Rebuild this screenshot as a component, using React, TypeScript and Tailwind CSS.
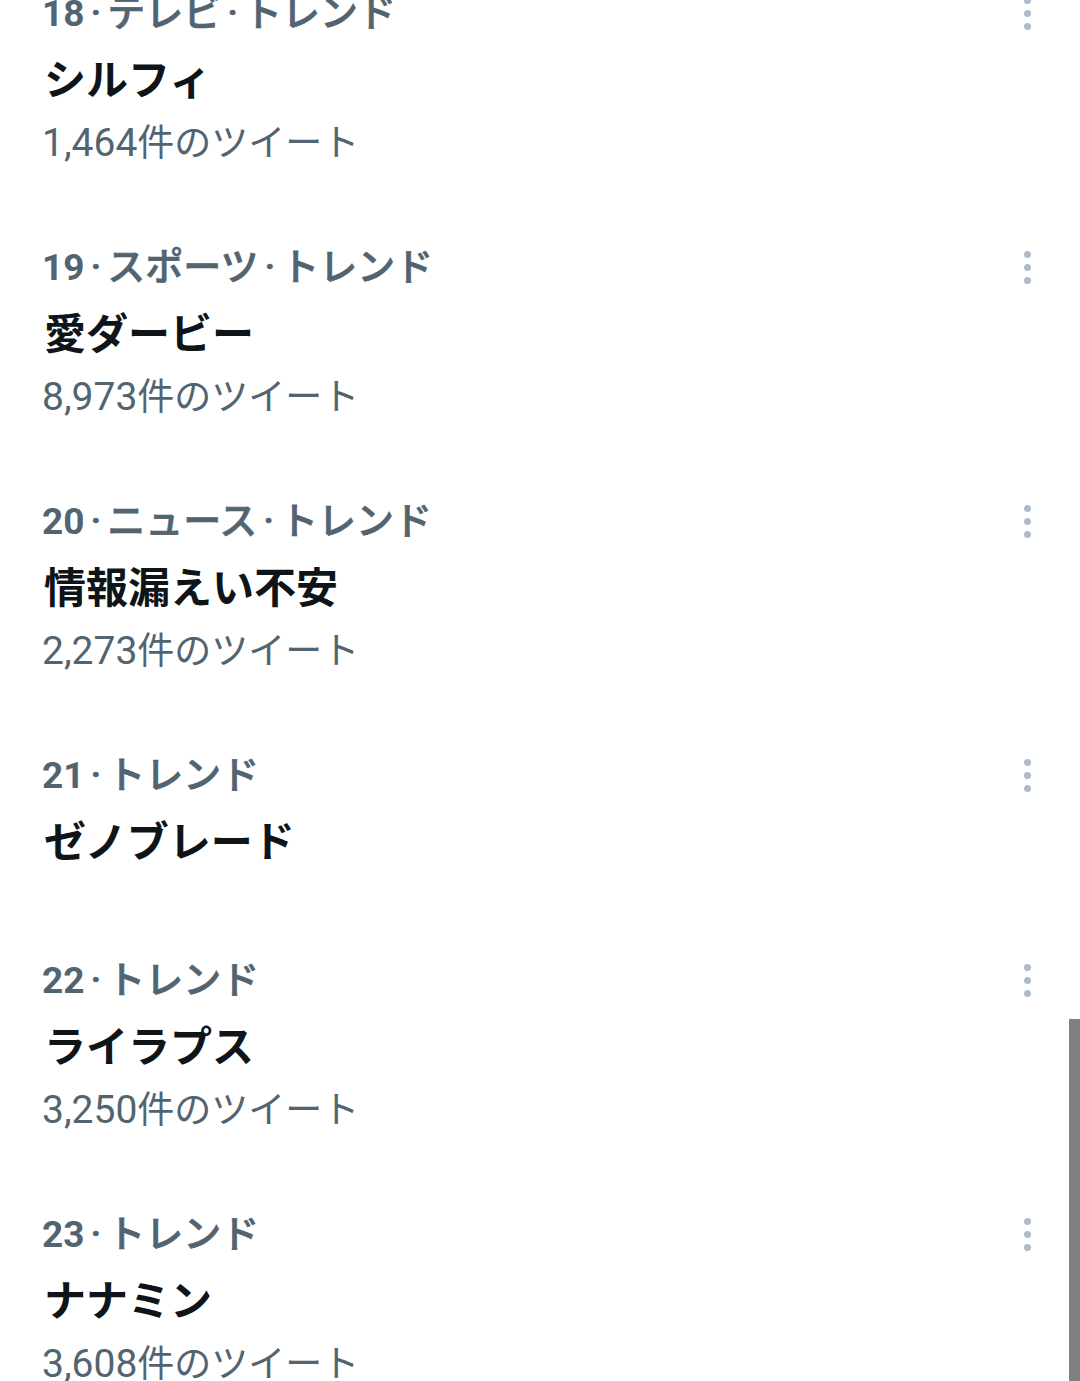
const trends = [
  { rank: 18, category: "テレビ", title: "シルフィ", count: "1,464" },
  { rank: 19, category: "スポーツ", title: "愛ダービー", count: "8,973" },
  { rank: 20, category: "ニュース", title: "情報漏えい不安", count: "2,273" },
  { rank: 21, category: "", title: "ゼノブレード", count: "" },
  { rank: 22, category: "", title: "ライラプス", count: "3,250" },
  { rank: 23, category: "", title: "ナナミン", count: "3,608" },
];

const font = "font-['Roboto','Noto_Sans_CJK_JP',sans-serif]";

function Dot() {
  return <span className="px-[6px]">·</span>;
}

function MoreIcon() {
  return (
    <div className="flex h-[49px] w-[40px] flex-col items-center justify-center gap-[6px]">
      <span className="h-[7px] w-[7px] rounded-full bg-[#aebbc8]" />
      <span className="h-[7px] w-[7px] rounded-full bg-[#aebbc8]" />
      <span className="h-[7px] w-[7px] rounded-full bg-[#aebbc8]" />
    </div>
  );
}

export default function App() {
  return (
    <main className={`relative h-[1381px] overflow-hidden bg-white ${font}`}>
      <div className="-mt-[48px]">
        {trends.map((trend) => (
          <div key={trend.rank} className="flex pb-[38px] pl-[42px] pr-[33px] pt-[37px]">
            <div className="flex-1">
              <div className="h-[49px] whitespace-nowrap text-[37px] leading-[49px] text-[#536471]">
                <span className="font-bold">{trend.rank}</span>
                <span className="text-[38px] font-medium [-webkit-text-stroke:0.7px_#536471]">
                  <Dot />
                  {trend.category && (
                    <>
                      {trend.category}
                      <Dot />
                    </>
                  )}
                  トレンド
                </span>
              </div>
              <div className="h-[81px] pl-[2px] pt-[2px] text-[42px] font-bold leading-[81px] text-[#0f1419]">{trend.title}</div>
              {trend.count && (
                <div className="h-[49px] text-[37px] leading-[49px] text-[#536471]">
                  <span className="text-[39px]">{trend.count}</span>件のツイート
                </div>
              )}
            </div>
            <MoreIcon />
          </div>
        ))}
      </div>
      <div className="absolute right-0 top-[1019px] h-[362px] w-[11px] bg-[#808084]" />
    </main>
  );
}
